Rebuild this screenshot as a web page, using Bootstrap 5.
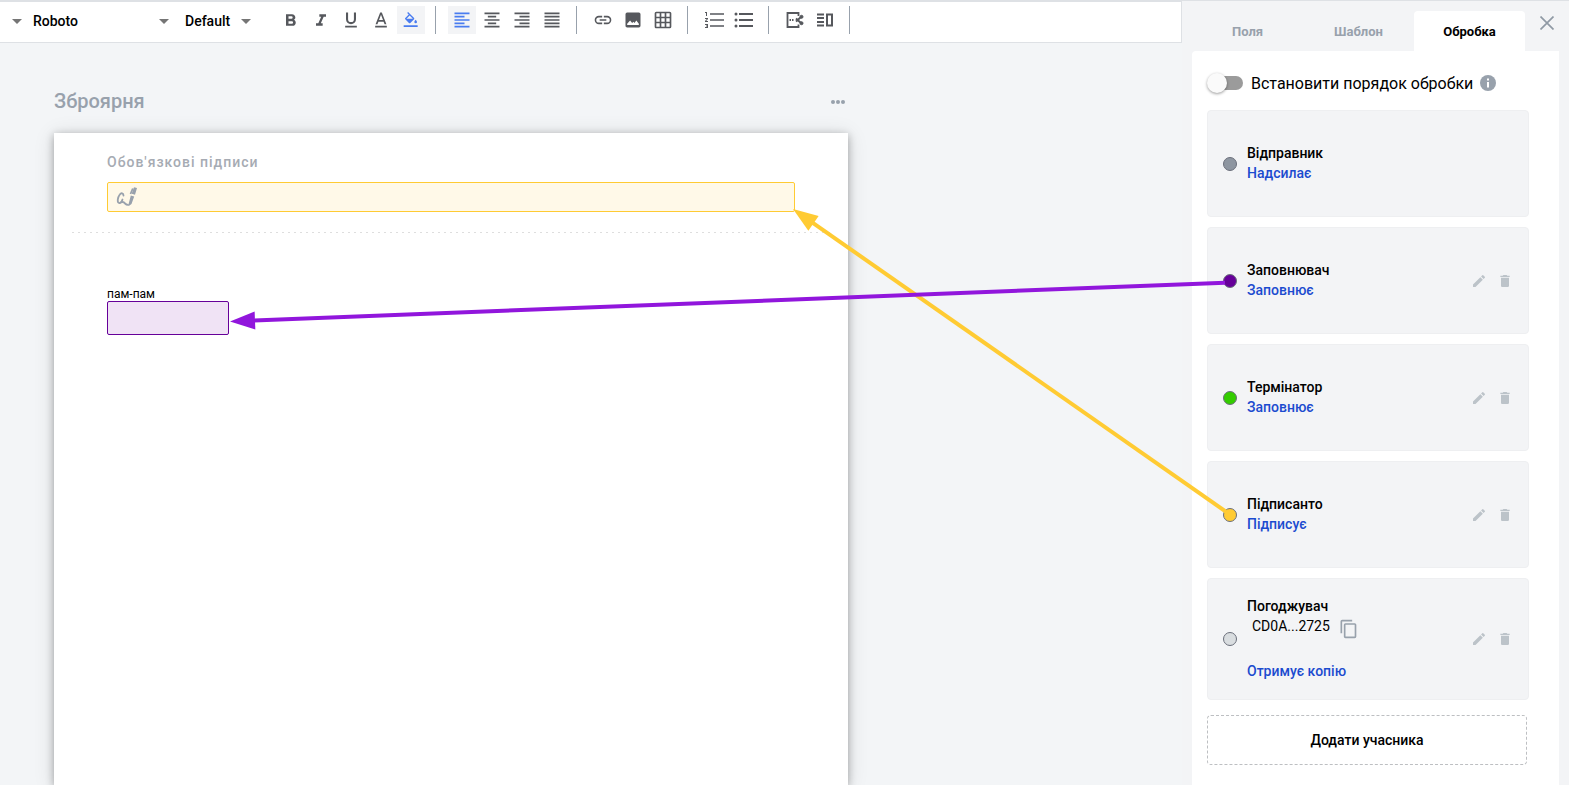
<!DOCTYPE html>
<html lang="uk">
<head>
<meta charset="utf-8">
<meta name="viewport" content="width=device-width, initial-scale=1">
<title>Зброярня</title>
<link href="https://cdn.jsdelivr.net/npm/bootstrap@5.3.0/dist/css/bootstrap.min.css" rel="stylesheet">
<style>
  :root { --line: #dee1e5; --muted: #98a1ac; --panel: #f3f4f6; --link: #1b4bcf; }
  body { font-family: Roboto, "Liberation Sans", sans-serif; font-size: 14px; line-height: 20px; color: #000; background: #f3f5f7; }
  svg { display: block; fill: currentColor; }
  .fw-medium { font-weight: 500; }

  .editor-bar { border-top: 2px solid var(--line); border-right: 1px solid var(--line); border-bottom: 1px solid var(--line); height: 43px; padding-top: 4px; }
  .pick { appearance: none; border: 0; border-radius: 0; padding: 2px 0 0; height: 28px; font-weight: 500; color: #000; background: url("data:image/svg+xml,%3Csvg xmlns='http://www.w3.org/2000/svg' viewBox='0 0 10 5'%3E%3Cpath d='M0 0h10L5 5z' fill='%23757575'/%3E%3C/svg%3E") no-repeat right 0 top 13px / 10px 5px; }
  .pick-style { width: 22px; margin-right: 11px; }
  .pick-font { width: 136px; margin-right: 16px; }
  .pick-size { width: 66px; margin-right: 26px; }
  .tool-row { gap: 2px; }
  .tool { width: 28px; height: 28px; padding: 0; border: 0; border-radius: 0; background: none; color: #56585d; display: flex; align-items: center; justify-content: center; }
  .tool.on { background: var(--panel); color: #4a7cf0; }
  .rule { width: 1px; height: 28px; margin: 0 10px 0 8px; background: #98a1ac; }

  .sheet-area { padding: 43px 54px 0; }
  .sheet-col { max-width: 794px; }
  .doc-title { font-size: 20px; line-height: 30px; font-weight: 500; color: var(--muted); margin-bottom: 17px; }
  .plain { border: 0; background: none; padding: 0; color: inherit; }
  .doc-menu { color: var(--muted); }
  .sheet { background: #fff; box-shadow: 0 2px 8px rgba(0,0,0,.3), 0 2px 20px rgba(0,0,0,.12); padding: 19px 18px 0; }
  .inset { padding: 0 35px; }
  .sign-label { color: #a6abb3; letter-spacing: 1px; font-weight: 500; margin-bottom: 10px; }
  .sign-field { height: 30px; border: 1px solid #ffcb33; border-radius: 2px; background: #fff9e8; color: var(--muted); padding: 0 8px; }
  .dashes { height: 1px; margin: 20px 0 54px; background: repeating-linear-gradient(90deg, #dedede 0 2px, transparent 2px 6px); }
  .field-label { font-size: 12px; line-height: 14px; }
  .text-field { width: 122px; height: 34px; border: 1px solid #660099; border-radius: 2px; background: #f0e3f5; }

  .side { width: 387px; background: var(--panel); border-top: 1px solid var(--line); padding: 10px 10px 0; }
  .side-tab { width: 111px; height: 40px; padding: 2px 0 0; border: 0; border-radius: 4px 4px 0 0; background: none; font-size: 13px; font-weight: 700; color: var(--muted); }
  .side-tab.active { background: #fff; color: #000; }
  .close-side { color: #909aa5; padding: 5px 0; margin-right: 5px; }
  .side-body { background: #fff; border-radius: 4px 0 0 0; padding: 20px 30px 0 15px; }
  .order-row { gap: 7px; margin-bottom: 15px; }
  .order-switch { appearance: none; width: 34px; height: 14px; margin: 0 1px 0 2px; background: #9b9b9b; border-radius: 7px; }
  .order-switch::before { content: ""; display: block; width: 20px; height: 20px; margin: -3px 0 0 -2px; border-radius: 50%; background: #fafafa; box-shadow: 0 1px 3px rgba(0,0,0,.4); }
  .order-switch:checked::before { margin-left: 16px; }
  .order-label { font-size: 16px; line-height: 24px; padding-top: 1px; margin-bottom: -1px; }
  .info-mark, .copy-code { color: var(--muted); }
  .members { gap: 10px; }
  .member { min-height: 107px; padding: 10px 15px; border: 1px solid #eeeff1; border-radius: 4px; background: var(--panel); }
  .member-tall { min-height: 122px; }
  .member-dot { width: 14px; height: 14px; border-radius: 50%; border: 1px solid #6b6f7b; }
  .member-info { margin: 0 10px; padding-bottom: 2px; }
  .member-tools { color: #bcc3c9; gap: 10px; }
  .role { color: var(--link); text-decoration: none; font-weight: 500; }
  .code-row { height: 45px; padding-left: 5px; }
  .copy-code { padding-top: 3px; }
  .add-member { height: 50px; border: 1px dashed #bdbfc2; border-radius: 4px; background: #fff; font-weight: 500; margin: 15px 2px 0 0; }
  .links-layer { pointer-events: none; }
</style>
</head>
<body>
<svg class="d-none" aria-hidden="true">
  <symbol id="i-edit" viewBox="0 0 24 24"><path d="M3 17.25V21h3.75L17.8 9.94l-3.75-3.75L3 17.25zM20.7 7.04a1 1 0 0 0 0-1.41l-2.34-2.34a1 1 0 0 0-1.41 0l-1.83 1.83 3.75 3.75 1.83-1.83z"/></symbol>
  <symbol id="i-trash" viewBox="0 0 24 24"><path d="M6 19c0 1.1.9 2 2 2h8a2 2 0 0 0 2-2V7H6v12zM19 4h-3.5l-1-1h-5l-1 1H5v2h14V4z"/></symbol>
</svg>
<div class="d-flex vh-100 overflow-hidden position-relative">
  <div class="flex-grow-1 d-flex flex-column overflow-hidden">
    <header class="editor-bar bg-white d-flex align-items-start flex-shrink-0">
      <select class="pick pick-style" aria-label="Стиль"><option></option></select>
      <select class="pick pick-font" aria-label="Шрифт"><option>Roboto</option></select>
      <select class="pick pick-size" aria-label="Розмір"><option>Default</option></select>
      <div class="tool-row d-flex">
        <button class="tool" aria-label="Жирний"><svg width="20" height="20" viewBox="0 0 24 24"><path d="M15.6 11.8c1-.7 1.600-1.800 1.600-2.800 0-2.300-1.700-4-4-4H6v14h8c2.100 0 3.700-1.700 3.700-3.800 0-1.500-.8-2.800-2.100-3.400zM9 7.500h3.500a1.500 1.500 0 0 1 0 3H9v-3zm4 9H9v-3h4a1.500 1.500 0 0 1 0 3z"/></svg></button>
        <button class="tool" aria-label="Курсив"><svg width="20" height="20" viewBox="0 0 24 24"><path d="M10 5v3h2.200l-3.400 8H6v3h8v-3h-2.200l3.400-8H18V5z"/></svg></button>
        <button class="tool" aria-label="Підкреслений"><svg width="20" height="20" viewBox="0 0 24 24"><path d="M12 17a6 6 0 0 0 6-6V3h-2.500v8a3.500 3.500 0 0 1-7 0V3H6v8a6 6 0 0 0 6 6zm-7 2v2h14v-2H5z"/></svg></button>
        <button class="tool" aria-label="Колір тексту"><svg width="20" height="20" viewBox="0 0 24 24"><path d="M5 19h14v2H5zM11 3 5.500 17h2.200l1.200-3h6.200l1.200 3h2.200L13 3h-2zm-1.400 9L12 5.700l2.400 6.300H9.600z"/></svg></button>
        <button class="tool on" aria-label="Колір тла"><svg width="16" height="16" viewBox="0 0 24 24"><path d="M16.600 9 7.600 0 6.200 1.400l2.400 2.400-5.200 5.100a1.500 1.500 0 0 0 0 2.100l5.500 5.500a1.500 1.500 0 0 0 2.100 0l5.600-5.500c.5-.6.5-1.500 0-2zM5.200 10 10 5.200l4.800 4.800H5.200zM19 11.500s-2 2.200-2 3.500a2 2 0 0 0 4 0c0-1.300-2-3.500-2-3.500zM1 20h21v2.500H1z"/></svg></button>
        <span class="rule"></span>
        <button class="tool on" aria-label="Ліворуч"><svg width="20" height="20" viewBox="0 0 24 24"><path d="M15 15H3v2h12v-2zm0-8H3v2h12V7zM3 13h18v-2H3v2zm0 8h18v-2H3v2zM3 3v2h18V3H3z"/></svg></button>
        <button class="tool" aria-label="По центру"><svg width="20" height="20" viewBox="0 0 24 24"><path d="M7 15v2h10v-2H7zm-4 6h18v-2H3v2zm0-8h18v-2H3v2zm4-6v2h10V7H7zM3 3v2h18V3H3z"/></svg></button>
        <button class="tool" aria-label="Праворуч"><svg width="20" height="20" viewBox="0 0 24 24"><path d="M3 21h18v-2H3v2zm6-4h12v-2H9v2zm-6-4h18v-2H3v2zm6-4h12V7H9v2zM3 3v2h18V3H3z"/></svg></button>
        <button class="tool" aria-label="По ширині"><svg width="20" height="20" viewBox="0 0 24 24"><path d="M3 21h18v-2H3v2zm0-4h18v-2H3v2zm0-4h18v-2H3v2zm0-4h18V7H3v2zm0-6v2h18V3H3z"/></svg></button>
        <span class="rule"></span>
        <button class="tool" aria-label="Посилання"><svg width="20" height="20" viewBox="0 0 24 24"><path d="M3.900 12A3.100 3.100 0 0 1 7 8.900h4V7H7a5 5 0 0 0 0 10h4v-1.900H7A3.100 3.100 0 0 1 3.900 12zM8 13h8v-2H8v2zm9-6h-4v1.900h4a3.100 3.100 0 0 1 0 6.200h-4V17h4a5 5 0 0 0 0-10z"/></svg></button>
        <button class="tool" aria-label="Зображення"><svg width="20" height="20" viewBox="0 0 24 24"><path d="M19 3H5a2 2 0 0 0-2 2v14c0 1.100.9 2 2 2h14a2 2 0 0 0 2-2V5a2 2 0 0 0-2-2zM5 18v-1.500L8.500 12.500l2.500 3.200 1.500-1.500 1.300 1.300L16 12.500l3 4V18z"/></svg></button>
        <button class="tool" aria-label="Таблиця"><svg width="20" height="20" viewBox="0 0 24 24"><path d="M20 2H4a2 2 0 0 0-2 2v16c0 1.100.9 2 2 2h16a2 2 0 0 0 2-2V4a2 2 0 0 0-2-2zM8 20H4v-4h4v4zm0-6H4v-4h4v4zm0-6H4V4h4v4zm6 12h-4v-4h4v4zm0-6h-4v-4h4v4zm0-6h-4V4h4v4zm6 12h-4v-4h4v4zm0-6h-4v-4h4v4zm0-6h-4V4h4v4z"/></svg></button>
        <span class="rule"></span>
        <button class="tool" aria-label="Нумерований список"><svg width="24" height="24" viewBox="0 0 24 24"><path d="M3 17h2v.5H4v1h1v.5H3v1h3v-4H3v1zm1-9h1V4H3v1h1v3zm-1 3h1.800L3 13.100v.9h3v-1H4.200L6 10.900V10H3v1zm5-5.700v1.400h14V5.300H8zm0 13.400h14v-1.400H8v1.400zm0-6h14v-1.400H8v1.400z"/></svg></button>
        <button class="tool" aria-label="Маркований список"><svg width="24" height="24" viewBox="0 0 24 24"><path d="M4 10.500a1.500 1.500 0 1 0 0 3 1.500 1.500 0 0 0 0-3zm0-6a1.500 1.500 0 1 0 0 3 1.500 1.500 0 0 0 0-3zm0 12a1.500 1.500 0 1 0 0 3 1.500 1.500 0 0 0 0-3zM7 19h14v-2H7v2zm0-6h14v-2H7v2zm0-8v2h14V5H7z"/></svg></button>
        <span class="rule"></span>
        <button class="tool" aria-label="Розрив сторінки"><svg width="20" height="20" viewBox="0 0 20 20" fill="none" stroke="currentColor"><path fill="none" stroke-width="1.800" d="M13.500 6V3H2.500v14h11v-2.500"/><path stroke-width="1.800" d="M4.500 10H6m1 0h1.500"/><path fill="none" stroke-width="2" d="M11 8.500l5 4.500M11 11.500l5-4.500"/><circle cx="16.500" cy="6.800" r="1.500"/><circle cx="16.500" cy="13.200" r="1.500"/></svg></button>
        <button class="tool" aria-label="Колонки"><svg width="18" height="18" viewBox="0 0 18 18"><path d="M1 2.500h7v2H1zM1 6h7v2H1zM1 10h7v2H1zM1 13.500h7v2H1zM10 2.500h7v13h-7zm2 2v9h3v-9z" fill-rule="evenodd"/></svg></button>
        <span class="rule"></span>
      </div>
    </header>

    <main class="sheet-area flex-grow-1 d-flex">
      <div class="sheet-col w-100 d-flex flex-column">
        <div class="d-flex justify-content-between align-items-start">
          <h1 class="doc-title">Зброярня</h1>
          <button class="plain doc-menu" aria-label="Меню документа"><svg width="20" height="30" viewBox="0 0 20 30"><circle cx="5" cy="16" r="2"/><circle cx="10" cy="16" r="2"/><circle cx="15" cy="16" r="2"/></svg></button>
        </div>
        <section class="sheet flex-grow-1">
          <div class="inset">
            <div class="sign-label">Обов'язкові підписи</div>
            <button id="sign-target" class="sign-field w-100 d-flex align-items-center" aria-label="Підпис">
              <svg width="22" height="20" viewBox="0 0 22 20"><path fill="none" stroke="currentColor" stroke-linecap="round" stroke-width="1.800" d="M7.500 8.500C7.500 6 5.200 5.500 3.800 7.500 1.500 10.500 1 15.500 3 16c2 .3 3-1.500 3.500-3.500M6.500 15c1.500 0 1.500.5 2.500 1.500s2 1.300 3 1.300"/><path d="m14.800 8.500 3.400 1-2.700 7.500-2.700 2-.6-.5zM18 .3l3 .7-2 6.800-3.300-1z"/><path fill="none" stroke="currentColor" stroke-width="1.800" d="m16.800 1.500-2.300 5.500"/></svg>
            </button>
          </div>
          <div class="dashes"></div>
          <div class="inset">
            <label class="field-label d-block" for="text-target">пам-пам</label>
            <input id="text-target" class="text-field d-block" type="text">
          </div>
        </section>
      </div>
    </main>
  </div>

  <aside class="side flex-shrink-0 d-flex flex-column">
    <div class="d-flex justify-content-between align-items-start">
      <div class="d-flex" role="tablist">
        <button class="side-tab" role="tab">Поля</button>
        <button class="side-tab" role="tab">Шаблон</button>
        <button class="side-tab active" role="tab" aria-selected="true">Обробка</button>
      </div>
      <button class="plain close-side" aria-label="Закрити"><svg width="14" height="14" viewBox="0 0 14 14"><path stroke="currentColor" stroke-width="1.700" d="M.5.5l13 13M13.500.5l-13 13"/></svg></button>
    </div>
    <div class="side-body flex-grow-1">
      <div class="order-row d-flex align-items-center">
        <input class="order-switch" type="checkbox" role="switch" id="order">
        <label class="order-label" for="order">Встановити порядок обробки</label>
        <svg class="info-mark" width="16" height="16" viewBox="0 0 16 16"><circle cx="8" cy="8" r="8"/><path fill="#fff" d="M7 3.500h2v2H7zM7 7h2v5.500H7z"/></svg>
      </div>
      <div class="members d-flex flex-column">
        <div class="member d-flex align-items-center">
          <span class="member-dot" style="background:#8e96a1"></span>
          <div class="member-info flex-grow-1"><div class="fw-medium">Відправник</div><a class="role" href="#">Надсилає</a></div>
        </div>
        <div class="member d-flex align-items-center">
          <span class="member-dot" id="dot-fill" style="background:#660099"></span>
          <div class="member-info flex-grow-1"><div class="fw-medium">Заповнювач</div><a class="role" href="#">Заповнює</a></div>
          <div class="member-tools d-flex"><button class="plain" aria-label="Редагувати"><svg width="16" height="16"><use href="#i-edit"/></svg></button><button class="plain" aria-label="Видалити"><svg width="16" height="16"><use href="#i-trash"/></svg></button></div>
        </div>
        <div class="member d-flex align-items-center">
          <span class="member-dot" style="background:#33cc00"></span>
          <div class="member-info flex-grow-1"><div class="fw-medium">Термінатор</div><a class="role" href="#">Заповнює</a></div>
          <div class="member-tools d-flex"><button class="plain" aria-label="Редагувати"><svg width="16" height="16"><use href="#i-edit"/></svg></button><button class="plain" aria-label="Видалити"><svg width="16" height="16"><use href="#i-trash"/></svg></button></div>
        </div>
        <div class="member d-flex align-items-center">
          <span class="member-dot" id="dot-sign" style="background:#ffcb33"></span>
          <div class="member-info flex-grow-1"><div class="fw-medium">Підписанто</div><a class="role" href="#">Підписує</a></div>
          <div class="member-tools d-flex"><button class="plain" aria-label="Редагувати"><svg width="16" height="16"><use href="#i-edit"/></svg></button><button class="plain" aria-label="Видалити"><svg width="16" height="16"><use href="#i-trash"/></svg></button></div>
        </div>
        <div class="member member-tall d-flex align-items-center">
          <span class="member-dot" style="background:#d9dde0"></span>
          <div class="member-info flex-grow-1">
            <div class="fw-medium">Погоджувач</div>
            <div class="code-row d-flex align-items-start"><span>CD0A...2725</span><button class="plain copy-code ms-2" aria-label="Копіювати"><svg width="20" height="20" viewBox="0 0 24 24"><path d="M17 1H5a2 2 0 0 0-2 2v14h2V3h12V1zm3 4H9a2 2 0 0 0-2 2v14c0 1.100.9 2 2 2h11a2 2 0 0 0 2-2V7a2 2 0 0 0-2-2zm0 16H9V7h11v14z"/></svg></button></div>
            <a class="role d-block" href="#">Отримує копію</a>
          </div>
          <div class="member-tools d-flex"><button class="plain" aria-label="Редагувати"><svg width="16" height="16"><use href="#i-edit"/></svg></button><button class="plain" aria-label="Видалити"><svg width="16" height="16"><use href="#i-trash"/></svg></button></div>
        </div>
      </div>
      <div class="d-flex"><button class="add-member flex-grow-1">Додати учасника</button></div>
    </div>
  </aside>

  <svg class="links-layer position-absolute top-0 start-0 w-100 h-100" aria-hidden="true">
    <g id="link-sign" fill="#ffcb33" stroke="#ffcb33"><line stroke-width="4"/><path stroke="none" d="M0 0 25-9V9z"/></g>
    <g id="link-fill" fill="#9116dc" stroke="#9116dc"><line stroke-width="4"/><path stroke="none" d="M0 0 25-9V9z"/></g>
  </svg>
</div>
<script src="https://cdn.jsdelivr.net/npm/bootstrap@5.3.0/dist/js/bootstrap.bundle.min.js"></script>
<script>
  // Draws an arrow from a participant's dot to the field assigned to it.
  function connect(groupId, dotId, fieldId, gap, atY, drop) {
    const dot = document.getElementById(dotId).getBoundingClientRect();
    const field = document.getElementById(fieldId).getBoundingClientRect();
    const group = document.getElementById(groupId);
    const x2 = field.right + gap, y2 = field.top + field.height * atY;
    const cx = dot.left + dot.width / 2, cy = dot.top + dot.height / 2 + drop;
    const angle = Math.atan2(cy - y2, cx - x2);
    const line = group.querySelector('line');
    line.setAttribute('x1', cx - 5 * Math.cos(angle));
    line.setAttribute('y1', cy - 5 * Math.sin(angle));
    line.setAttribute('x2', x2 + 22 * Math.cos(angle));
    line.setAttribute('y2', y2 + 22 * Math.sin(angle));
    group.querySelector('path').setAttribute('transform', `translate(${x2} ${y2}) rotate(${angle * 180 / Math.PI})`);
  }
  function drawLinks() {
    connect('link-sign', 'dot-sign', 'sign-target', -2, 0.9, 0);
    connect('link-fill', 'dot-fill', 'text-target', 1, 0.6, 2);
  }
  drawLinks();
  window.addEventListener('resize', drawLinks);
</script>
</body>
</html>
